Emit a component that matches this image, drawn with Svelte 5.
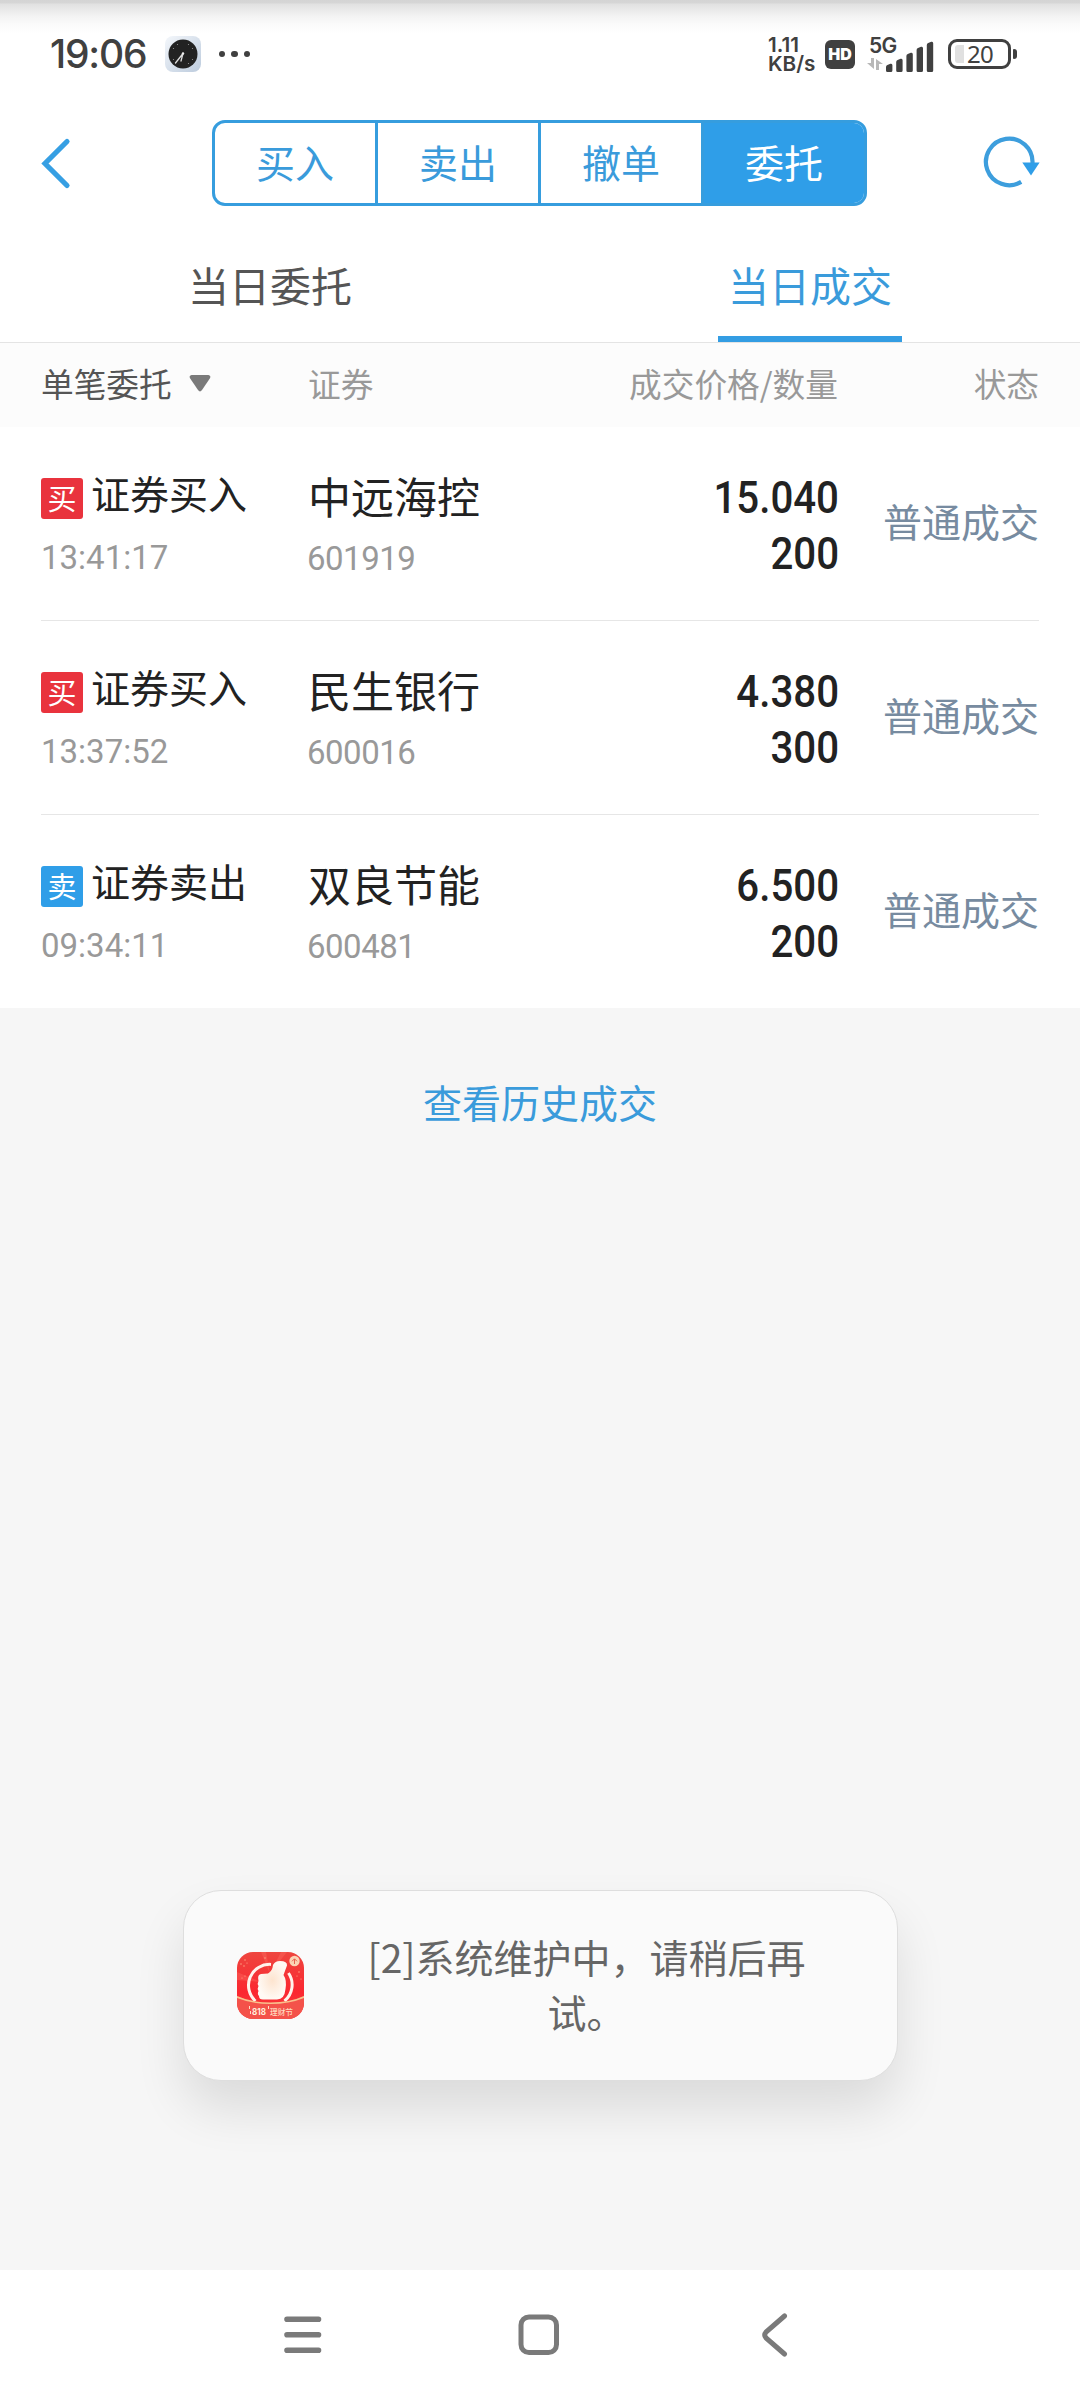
<script>
  const segments = ['买入', '卖出', '撤单', '委托'];
  const activeSegment = '委托';
  const tabs = ['当日委托', '当日成交'];
  const activeTab = '当日成交';
  const trades = [
    { side: 'buy', badge: '买', type: '证券买入', time: '13:41:17', name: '中远海控', code: '601919', price: '15.040', qty: '200', state: '普通成交' },
    { side: 'buy', badge: '买', type: '证券买入', time: '13:37:52', name: '民生银行', code: '600016', price: '4.380', qty: '300', state: '普通成交' },
    { side: 'sell', badge: '卖', type: '证券卖出', time: '09:34:11', name: '双良节能', code: '600481', price: '6.500', qty: '200', state: '普通成交' }
  ];
  const signal = [8, 13, 19, 25, 30];
</script>

<div class="screen">
  <div class="status-bar">
    <span class="clock">19:06</span>
    <svg class="clock-app" width="36" height="36" viewBox="0 0 36 36">
      <defs>
        <linearGradient id="clockBg" x1="0" y1="0" x2="1" y2="1">
          <stop offset="0" stop-color="#f4f7fb" />
          <stop offset="1" stop-color="#bccbdd" />
        </linearGradient>
      </defs>
      <rect width="36" height="36" rx="8" fill="url(#clockBg)" />
      <circle cx="18" cy="18" r="14.5" fill="#222" />
      <path d="M18 17.5 10.5 27M18 17.5 16 25" stroke="#ddd" stroke-width="1.3" stroke-linecap="round" />
      <g fill="#999">
        <circle cx="12.5" cy="8.5" r=".6" /><circle cx="23.5" cy="8.5" r=".6" />
        <circle cx="8.5" cy="12.5" r=".6" /><circle cx="27.5" cy="12.5" r=".6" />
        <circle cx="8.5" cy="23.5" r=".6" /><circle cx="27.5" cy="23.5" r=".6" />
        <circle cx="23.5" cy="27.5" r=".6" />
      </g>
      <circle cx="18" cy="17.5" r="1.2" fill="#eee" />
    </svg>
    <span class="dots"><i></i><i></i><i></i></span>
    <span class="grow"></span>
    <span class="speed">1.11<br />KB/s</span>
    <span class="hd">HD</span>
    <span class="network">
      <span class="gen">
        <b>5G</b>
        <svg width="16" height="12" viewBox="0 0 16 12" fill="#b8b8b8">
          <path d="M4 0H7V11L0 5H4ZM9 12V1L16 6H12V12Z" />
        </svg>
      </span>
      <svg class="bars" width="48" height="31" viewBox="0 0 48 31" fill="#404040">
        {#each signal as h, i}
          <path d="M{i * 10.2} {31 - h + 3}q0-1.5 1.4-2l3-1.2q2-.6 2 1.4V29.5q0 1.5-1.5 1.5H{i * 10.2 + 1.5}q-1.5 0-1.5-1.5Z" />
        {/each}
      </svg>
    </span>
    <span class="battery"><i class="charge"></i><span>20</span></span>
    <i class="knob"></i>
  </div>

  <header class="title-bar">
    <svg class="back" width="34" height="56" viewBox="0 0 34 56" fill="none">
      <path d="M28 6.500 6 28.500 28 50.500" stroke="#369fe3" stroke-width="5.2" stroke-linecap="round" stroke-linejoin="miter" />
    </svg>
    <nav class="segments">
      {#each segments as s}
        <span class:active={s === activeSegment}>{s}</span>
      {/each}
    </nav>
    <svg class="refresh" width="58" height="56" viewBox="0 0 58 56" fill="none">
      <path d="M39.2 46.9A23.3 23.3 0 1 1 50.5 28" stroke="#3d9edd" stroke-width="4.2" />
      <path d="M40.300 27.500H57.600L49 40.500Z" fill="#2f9ee8" />
    </svg>
  </header>

  <nav class="tabs">
    {#each tabs as t}
      <div class="tab" class:active={t === activeTab}><span>{t}</span></div>
    {/each}
  </nav>

  <div class="cols head">
    <span class="filter">
      单笔委托
      <svg width="22" height="17" viewBox="0 0 22 17">
        <path d="M2.5 0H19.5Q22.5 .8 20.8 3.5L13 15Q11 17.8 9 15L1.2 3.5Q-.5 .8 2.5 0Z" fill="#7a7a7a" />
      </svg>
    </span>
    <span>证券</span>
    <span class="right">成交价格/数量</span>
    <span class="right">状态</span>
  </div>

  <main>
    {#each trades as t}
      <div class="cols row">
        <div class="kind">
          <div class="type"><i class="badge {t.side}">{t.badge}</i><span>{t.type}</span></div>
          <div class="num time">{t.time}</div>
        </div>
        <div class="stock">
          <div class="name">{t.name}</div>
          <div class="num code">{t.code}</div>
        </div>
        <div class="deal"><div>{t.price}</div><div>{t.qty}</div></div>
        <div class="state">{t.state}</div>
      </div>
    {/each}
  </main>

  <section class="rest">
    <span class="history">查看历史成交</span>
    <div class="toast">
      <svg width="67" height="67" viewBox="0 0 67 67">
        <defs>
          <linearGradient id="appBg" x1="0" y1="0" x2="0" y2="1">
            <stop offset="0" stop-color="#ee463f" />
            <stop offset=".6" stop-color="#fb2730" />
            <stop offset="1" stop-color="#f6423f" />
          </linearGradient>
          <radialGradient id="thumb">
            <stop offset="0" stop-color="#fde4cf" />
            <stop offset="1" stop-color="#fffaf5" />
          </radialGradient>
          <clipPath id="appClip"><rect width="67" height="67" rx="16" /></clipPath>
        </defs>
        <g clip-path="url(#appClip)">
          <rect width="67" height="67" fill="url(#appBg)" />
          <path d="M24 0 33 22 29 0ZM44 0 34 20 50 0ZM0 20 24 30 0 28Z" fill="#ff7468" opacity=".35" />
          <g fill="#ffb08c">
            <circle cx="4" cy="12" r=".7" /><circle cx="8" cy="8" r=".7" /><circle cx="7" cy="14" r=".7" />
            <circle cx="10" cy="11" r=".6" /><circle cx="5" cy="26" r=".6" /><circle cx="8" cy="24" r=".6" />
            <circle cx="28" cy="6" r=".7" /><circle cx="62" cy="20" r=".7" /><circle cx="60" cy="24" r=".6" /><circle cx="64" cy="27" r=".6" />
          </g>
          <path d="M18.5 49A21 21 0 0 1 34 12.4M51.5 21A21 21 0 0 1 47.500 49" fill="none" stroke="#fff3ec" stroke-width="3" />
          <path d="M24 22L31 21.500Q35.500 19 36 13Q38 9 43 9Q50.500 9 50 13.500L46.500 23Q50 28 48.500 37Q47.500 47.500 40 47.500H26Q22 47.500 22 44Q20 42 21.500 39Q20 36.500 21.500 34Q20 31.500 21.500 29Q20 22.500 24 22Z" fill="url(#thumb)" />
          <path d="M0 44Q14 51 33.500 51T67 44V67H0Z" fill="#f4524a" />
          <path d="M0 44Q14 50.500 33.500 50.500T67 44V46Q52 52 33.500 52T0 46Z" fill="#f9c08c" />
          <circle cx="57.500" cy="9" r="5.200" fill="#fbd3b5" />
          <path d="M55 9.300 57.500 6.800 60 9.300M57.500 7V12" fill="none" stroke="#e8604f" stroke-width="1" />
          <text class="app-818" x="15" y="63" textLength="14" lengthAdjust="spacingAndGlyphs">818</text>
          <text class="app-fest" x="33" y="62.500" textLength="23" lengthAdjust="spacingAndGlyphs">理财节</text>
          <path d="M12.500 54v3M13.500 59v3M31.500 54v3" stroke="#ffe0c8" stroke-width="1" />
        </g>
      </svg>
      <p>[2]系统维护中，请稍后再试。</p>
    </div>
  </section>

  <footer class="nav">
    <svg width="40" height="44" viewBox="0 0 40 44" stroke="#7a7a7a" stroke-width="5.6" stroke-linecap="round">
      <path d="M4 6.300H35.500M4 21.800H35.500M4 37.200H35.500" />
    </svg>
    <svg width="44" height="44" viewBox="0 0 44 44" fill="none" stroke="#7a7a7a" stroke-width="5">
      <rect x="4" y="4" width="35.500" height="35.500" rx="8" />
    </svg>
    <svg width="30" height="44" viewBox="0 0 30 44" fill="none" stroke="#7a7a7a" stroke-width="5" stroke-linecap="round">
      <path d="M24.500 3 6 19Q3.500 22 6 25L24.500 41" />
    </svg>
  </footer>
</div>

<style>
  :global(body) { margin: 0; background: #fff; }
  .screen {
    width: 1080px;
    height: 2400px;
    display: flex;
    flex-direction: column;
    overflow: hidden;
    background: #fff;
    font-family: "Noto Sans CJK SC", sans-serif;
    color: #222;
  }
  i { font-style: normal; }
  svg { display: block; flex: none; }

  .status-bar {
    height: 108px;
    flex: none;
    box-sizing: border-box;
    padding: 0 63px 0 50px;
    display: flex;
    align-items: center;
    color: #404040;
    background: linear-gradient(#d4d4d4 0, #d6d6d6 3px, #e1e1e1 4px, #f3f3f3 16px, #fbfbfb 25px, #fff 34px);
  }
  .clock { font: 500 39px/40px Inter, sans-serif; width: 115px; letter-spacing: -1.200px; white-space: nowrap; }
  .dots { display: flex; gap: 6.200px; margin-left: 18px; }
  .dots i { width: 6.200px; height: 6.200px; border-radius: 50%; background: #404040; }
  .grow { flex: 1; }
  .speed { width: 57px; font: 600 20.700px/19.500px Inter, sans-serif; white-space: nowrap; }
  .hd {
    width: 30px; height: 29px; border-radius: 6px; background: #404040; color: #fff;
    font: 900 16px/29px Inter, sans-serif; text-align: center;
  }
  .network { display: flex; margin-left: 12px; height: 35px; }
  .gen { width: 19px; display: flex; flex-direction: column; font: 600 21px/20px Inter, sans-serif; white-space: nowrap; gap: 2px; }
  .gen b { font-weight: 600; letter-spacing: -0.6px; margin-left: 2px; margin-top: -1px; }
  .bars { align-self: flex-end; }
  .battery {
    box-sizing: border-box; width: 63px; height: 30px; border: 3px solid #404040; border-radius: 9px;
    margin-left: 14px; padding-left: 4px; display: flex; align-items: center; gap: 3px;
    font: 400 24px/24px "Noto Sans", sans-serif; letter-spacing: -0.8px;
  }
  .charge { width: 9px; height: 18px; border-radius: 3px 0 0 3px; background: #e0e0e0; }
  .knob { width: 4px; height: 10px; margin-left: 2px; border-radius: 1px 3px 3px 1px; background: #404040; }

  .title-bar {
    height: 110px; flex: none; box-sizing: border-box; padding: 0 40px 0 39px;
    display: flex; align-items: center;
  }
  .refresh { margin-left: auto; }
  .segments {
    width: 655px; height: 86px; box-sizing: border-box; border: 3px solid #369dde; border-radius: 13px;
    margin-left: 139px;
    display: grid; grid-template-columns: 163px 163px 163px 1fr; overflow: hidden;
  }
  .segments span {
    text-align: center; font-size: 39px; line-height: 76px; color: #3a9bdb;
    border-right: 3px solid #369dde;
  }
  .segments span.active { background: #2f9ee8; color: #fff; border-right: 0; }

  .tabs { height: 124px; flex: none; display: grid; grid-template-columns: 1fr 1fr; border-bottom: 1px solid #e4e4e4; }
  .tab { display: flex; justify-content: center; font-size: 41px; color: #555; }
  .tab span { box-sizing: border-box; width: 184px; height: 124px; line-height: 132px; text-align: center; }
  .tab.active span { color: #3a9bdb; border-bottom: 6px solid #339de3; }

  .cols { display: grid; grid-template-columns: 267px 262px 268px 201px; margin: 0 41px; }
  .right { text-align: right; }
  .head {
    height: 84px; flex: none; margin: 0; padding: 0 41px; background: #fcfcfc;
    font-size: 32.700px; line-height: 80px; color: #999;
  }
  .filter { display: flex; height: 80px; align-items: center; gap: 17px; color: #555; }

  .row { height: 193px; border-bottom: 1px solid #e6e6e6; }
  .row:last-child { border-bottom-color: transparent; height: 192px; }
  .kind, .stock { padding-top: 40px; }
  .type { display: flex; align-items: flex-start; font-size: 39px; line-height: 51px; height: 54px; gap: 8px; }
  .badge {
    width: 42px; height: 41px; border-radius: 3px; color: #fff; font-size: 29px; line-height: 39px;
    text-align: center; margin-top: 11px;
  }
  .badge.buy { background: #e9333d; }
  .badge.sell { background: #2f9ee8; }
  .num { font: 400 33px/40px Roboto, sans-serif; color: #999; letter-spacing: -0.5px; }
  .time { margin-top: 17px; letter-spacing: 0; }
  .name { font-size: 43px; line-height: 56px; }
  .code { margin-top: 16px; margin-left: -1px; }
  .deal {
    padding-top: 44px; font: 500 43.500px/56px Roboto, sans-serif; text-align: right; margin-right: -1px;
    transform: scaleX(.925); transform-origin: right;
  }
  .state { font-size: 39px; line-height: 187px; text-align: right; color: #778ba0; }

  .rest { flex: 1; background: #f6f6f6; display: flex; flex-direction: column; align-items: center; }
  .history { margin-top: 65px; font-size: 39px; line-height: 56px; color: #3a9bdb; }
  .toast {
    box-sizing: border-box; width: 715px; height: 191px; margin: auto 0 189px; padding: 0 89px 0 53px;
    border: 1px solid #dedede; border-radius: 38px; background: #fafafa;
    box-shadow: 0 28px 50px rgba(0, 0, 0, .11);
    display: flex; align-items: center; justify-content: space-between;
  }
  .toast p { margin: -4px 0 0; width: 442px; font-size: 39px; line-height: 55px; text-align: center; color: #666; }
  .app-818 { font: 700 9px Inter, sans-serif; fill: #ffeede; }
  .app-fest { font: 500 8px "Noto Sans CJK SC", sans-serif; fill: #ffd9bf; }

  .nav {
    height: 130px; flex: none; box-sizing: border-box; padding: 0 290px 0 283px;
    display: grid; grid-template-columns: 234px 1fr auto; align-items: center; background: #fff;
  }
</style>
